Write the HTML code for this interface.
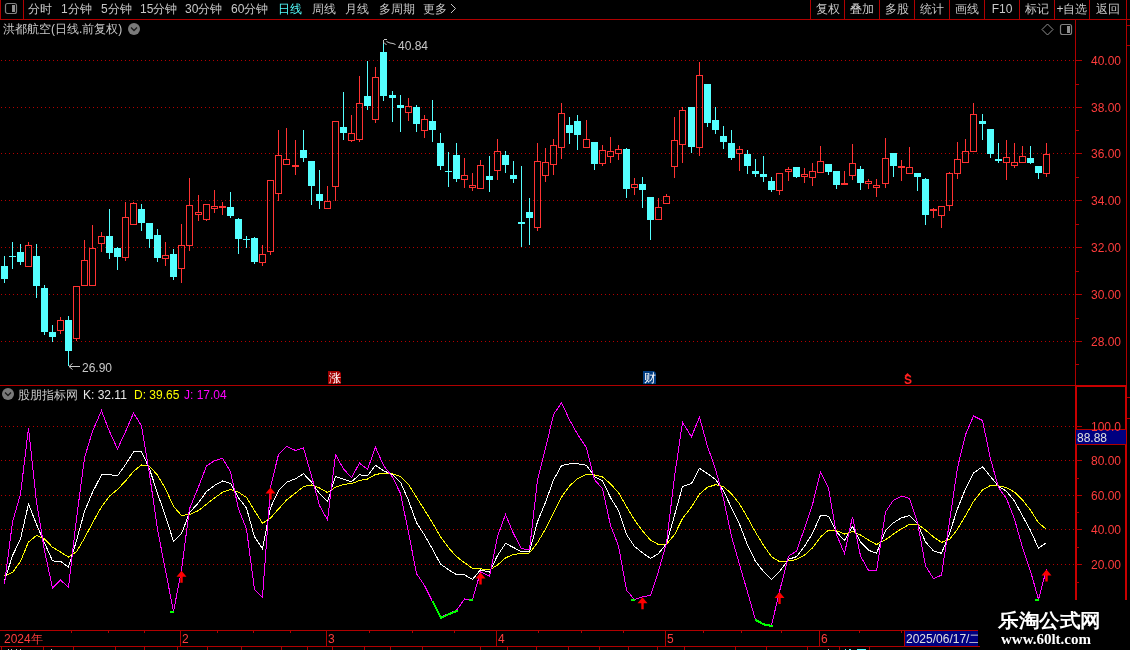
<!DOCTYPE html><html><head><meta charset="utf-8"><style>
html,body{margin:0;padding:0;background:#000;width:1130px;height:650px;overflow:hidden}
svg{position:absolute;left:0;top:0}
.t{font-family:"Liberation Sans",sans-serif;font-size:12px}
svg{will-change:transform}
</style></head><body>
<svg width="1130" height="650" viewBox="0 0 1130 650">
<rect width="1130" height="650" fill="#000"/>
<g shape-rendering="crispEdges"><line x1="1" y1="60.5" x2="1075" y2="60.5" stroke="#B40000" stroke-width="1" stroke-dasharray="1 3"/><line x1="1" y1="107.5" x2="1075" y2="107.5" stroke="#B40000" stroke-width="1" stroke-dasharray="1 3"/><line x1="1" y1="153.5" x2="1075" y2="153.5" stroke="#B40000" stroke-width="1" stroke-dasharray="1 3"/><line x1="1" y1="200.5" x2="1075" y2="200.5" stroke="#B40000" stroke-width="1" stroke-dasharray="1 3"/><line x1="1" y1="247.5" x2="1075" y2="247.5" stroke="#B40000" stroke-width="1" stroke-dasharray="1 3"/><line x1="1" y1="294.5" x2="1075" y2="294.5" stroke="#B40000" stroke-width="1" stroke-dasharray="1 3"/><line x1="1" y1="341.5" x2="1075" y2="341.5" stroke="#B40000" stroke-width="1" stroke-dasharray="1 3"/><line x1="1" y1="426.5" x2="1075" y2="426.5" stroke="#B40000" stroke-width="1" stroke-dasharray="1 3"/><line x1="1" y1="460.5" x2="1075" y2="460.5" stroke="#B40000" stroke-width="1" stroke-dasharray="1 3"/><line x1="1" y1="495.5" x2="1075" y2="495.5" stroke="#B40000" stroke-width="1" stroke-dasharray="1 3"/><line x1="1" y1="529.5" x2="1075" y2="529.5" stroke="#B40000" stroke-width="1" stroke-dasharray="1 3"/><line x1="1" y1="564.5" x2="1075" y2="564.5" stroke="#B40000" stroke-width="1" stroke-dasharray="1 3"/></g>
<g shape-rendering="crispEdges"><rect x="4" y="256" width="1" height="27" fill="#54FFFF"/><rect x="1" y="266" width="7" height="13" fill="#54FFFF"/><rect x="12" y="242" width="1" height="27" fill="#54FFFF"/><rect x="9" y="256" width="7" height="1" fill="#54FFFF"/><rect x="20" y="244" width="1" height="21" fill="#54FFFF"/><rect x="17" y="252" width="7" height="10" fill="#54FFFF"/><rect x="28" y="242" width="1" height="3" fill="#FF3232"/><rect x="25.5" y="245.5" width="6" height="21" fill="none" stroke="#FF3232" stroke-width="1"/><rect x="36" y="244" width="1" height="54" fill="#54FFFF"/><rect x="33" y="256" width="7" height="30" fill="#54FFFF"/><rect x="44" y="285" width="1" height="50" fill="#54FFFF"/><rect x="41" y="288" width="7" height="44" fill="#54FFFF"/><rect x="52" y="325" width="1" height="17" fill="#54FFFF"/><rect x="49" y="332" width="7" height="5" fill="#54FFFF"/><rect x="60" y="317" width="1" height="3" fill="#FF3232"/><rect x="60" y="331" width="1" height="3" fill="#FF3232"/><rect x="57.5" y="320.5" width="6" height="10" fill="none" stroke="#FF3232" stroke-width="1"/><rect x="68" y="316" width="1" height="50" fill="#54FFFF"/><rect x="65" y="320" width="7" height="31" fill="#54FFFF"/><rect x="76" y="339" width="1" height="2" fill="#FF3232"/><rect x="73.5" y="286.5" width="6" height="52" fill="none" stroke="#FF3232" stroke-width="1"/><rect x="84" y="240" width="1" height="20" fill="#FF3232"/><rect x="81.5" y="260.5" width="6" height="25" fill="none" stroke="#FF3232" stroke-width="1"/><rect x="92" y="225" width="1" height="23" fill="#FF3232"/><rect x="89.5" y="248.5" width="6" height="37" fill="none" stroke="#FF3232" stroke-width="1"/><rect x="101" y="232" width="1" height="4" fill="#FF3232"/><rect x="101" y="244" width="1" height="8" fill="#FF3232"/><rect x="98.5" y="236.5" width="6" height="7" fill="none" stroke="#FF3232" stroke-width="1"/><rect x="109" y="209" width="1" height="50" fill="#54FFFF"/><rect x="106" y="236" width="7" height="17" fill="#54FFFF"/><rect x="117" y="247" width="1" height="23" fill="#54FFFF"/><rect x="114" y="248" width="7" height="9" fill="#54FFFF"/><rect x="125" y="202" width="1" height="15" fill="#FF3232"/><rect x="125" y="258" width="1" height="3" fill="#FF3232"/><rect x="122.5" y="217.5" width="6" height="40" fill="none" stroke="#FF3232" stroke-width="1"/><rect x="133" y="202" width="1" height="1" fill="#FF3232"/><rect x="130.5" y="203.5" width="6" height="21" fill="none" stroke="#FF3232" stroke-width="1"/><rect x="141" y="204" width="1" height="27" fill="#54FFFF"/><rect x="138" y="209" width="7" height="14" fill="#54FFFF"/><rect x="149" y="223" width="1" height="25" fill="#54FFFF"/><rect x="146" y="223" width="7" height="16" fill="#54FFFF"/><rect x="157" y="229" width="1" height="33" fill="#54FFFF"/><rect x="154" y="235" width="7" height="23" fill="#54FFFF"/><rect x="165" y="242" width="1" height="13" fill="#FF3232"/><rect x="165" y="259" width="1" height="7" fill="#FF3232"/><rect x="162.5" y="255.5" width="6" height="3" fill="none" stroke="#FF3232" stroke-width="1"/><rect x="173" y="249" width="1" height="31" fill="#54FFFF"/><rect x="170" y="254" width="7" height="23" fill="#54FFFF"/><rect x="181" y="224" width="1" height="21" fill="#FF3232"/><rect x="181" y="269" width="1" height="14" fill="#FF3232"/><rect x="178.5" y="245.5" width="6" height="23" fill="none" stroke="#FF3232" stroke-width="1"/><rect x="189" y="178" width="1" height="27" fill="#FF3232"/><rect x="189" y="246" width="1" height="5" fill="#FF3232"/><rect x="186.5" y="205.5" width="6" height="40" fill="none" stroke="#FF3232" stroke-width="1"/><rect x="198" y="195" width="1" height="17" fill="#FF3232"/><rect x="198" y="215" width="1" height="6" fill="#FF3232"/><rect x="195.5" y="212.5" width="6" height="2" fill="none" stroke="#FF3232" stroke-width="1"/><rect x="206" y="220" width="1" height="1" fill="#FF3232"/><rect x="203.5" y="204.5" width="6" height="15" fill="none" stroke="#FF3232" stroke-width="1"/><rect x="214" y="190" width="1" height="16" fill="#FF3232"/><rect x="214" y="209" width="1" height="4" fill="#FF3232"/><rect x="211.5" y="206.5" width="6" height="2" fill="none" stroke="#FF3232" stroke-width="1"/><rect x="222" y="202" width="1" height="4" fill="#FF3232"/><rect x="222" y="208" width="1" height="7" fill="#FF3232"/><rect x="219" y="206" width="7" height="2" fill="#FF3232"/><rect x="230" y="192" width="1" height="26" fill="#54FFFF"/><rect x="227" y="207" width="7" height="9" fill="#54FFFF"/><rect x="238" y="218" width="1" height="36" fill="#54FFFF"/><rect x="235" y="219" width="7" height="20" fill="#54FFFF"/><rect x="246" y="236" width="1" height="12" fill="#54FFFF"/><rect x="243" y="239" width="7" height="1" fill="#54FFFF"/><rect x="254" y="237" width="1" height="27" fill="#54FFFF"/><rect x="251" y="238" width="7" height="24" fill="#54FFFF"/><rect x="262" y="245" width="1" height="9" fill="#FF3232"/><rect x="262" y="263" width="1" height="3" fill="#FF3232"/><rect x="259.5" y="254.5" width="6" height="8" fill="none" stroke="#FF3232" stroke-width="1"/><rect x="270" y="252" width="1" height="3" fill="#FF3232"/><rect x="267.5" y="180.5" width="6" height="71" fill="none" stroke="#FF3232" stroke-width="1"/><rect x="278" y="130" width="1" height="25" fill="#FF3232"/><rect x="278" y="194" width="1" height="7" fill="#FF3232"/><rect x="275.5" y="155.5" width="6" height="38" fill="none" stroke="#FF3232" stroke-width="1"/><rect x="286" y="128" width="1" height="31" fill="#FF3232"/><rect x="283.5" y="159.5" width="6" height="5" fill="none" stroke="#FF3232" stroke-width="1"/><rect x="295" y="140" width="1" height="25" fill="#FF3232"/><rect x="295" y="167" width="1" height="8" fill="#FF3232"/><rect x="292" y="165" width="7" height="2" fill="#FF3232"/><rect x="303" y="130" width="1" height="32" fill="#54FFFF"/><rect x="300" y="150" width="7" height="8" fill="#54FFFF"/><rect x="311" y="161" width="1" height="44" fill="#54FFFF"/><rect x="308" y="161" width="7" height="25" fill="#54FFFF"/><rect x="319" y="170" width="1" height="39" fill="#54FFFF"/><rect x="316" y="194" width="7" height="7" fill="#54FFFF"/><rect x="327" y="186" width="1" height="15" fill="#FF3232"/><rect x="324.5" y="201.5" width="6" height="7" fill="none" stroke="#FF3232" stroke-width="1"/><rect x="335" y="187" width="1" height="14" fill="#FF3232"/><rect x="332.5" y="121.5" width="6" height="65" fill="none" stroke="#FF3232" stroke-width="1"/><rect x="343" y="92" width="1" height="48" fill="#54FFFF"/><rect x="340" y="127" width="7" height="6" fill="#54FFFF"/><rect x="351" y="115" width="1" height="18" fill="#FF3232"/><rect x="351" y="141" width="1" height="1" fill="#FF3232"/><rect x="348.5" y="133.5" width="6" height="7" fill="none" stroke="#FF3232" stroke-width="1"/><rect x="359" y="76" width="1" height="27" fill="#FF3232"/><rect x="359" y="140" width="1" height="2" fill="#FF3232"/><rect x="356.5" y="103.5" width="6" height="36" fill="none" stroke="#FF3232" stroke-width="1"/><rect x="367" y="61" width="1" height="49" fill="#54FFFF"/><rect x="364" y="96" width="7" height="10" fill="#54FFFF"/><rect x="375" y="67" width="1" height="10" fill="#FF3232"/><rect x="375" y="120" width="1" height="3" fill="#FF3232"/><rect x="372.5" y="77.5" width="6" height="42" fill="none" stroke="#FF3232" stroke-width="1"/><rect x="383" y="42" width="1" height="59" fill="#54FFFF"/><rect x="380" y="52" width="7" height="44" fill="#54FFFF"/><rect x="392" y="91" width="1" height="31" fill="#54FFFF"/><rect x="389" y="95" width="7" height="3" fill="#54FFFF"/><rect x="400" y="95" width="1" height="37" fill="#54FFFF"/><rect x="397" y="105" width="7" height="3" fill="#54FFFF"/><rect x="408" y="98" width="1" height="8" fill="#FF3232"/><rect x="408" y="113" width="1" height="8" fill="#FF3232"/><rect x="405.5" y="106.5" width="6" height="6" fill="none" stroke="#FF3232" stroke-width="1"/><rect x="416" y="105" width="1" height="27" fill="#54FFFF"/><rect x="413" y="107" width="7" height="17" fill="#54FFFF"/><rect x="424" y="115" width="1" height="4" fill="#FF3232"/><rect x="424" y="131" width="1" height="7" fill="#FF3232"/><rect x="421.5" y="119.5" width="6" height="11" fill="none" stroke="#FF3232" stroke-width="1"/><rect x="432" y="100" width="1" height="42" fill="#54FFFF"/><rect x="429" y="121" width="7" height="9" fill="#54FFFF"/><rect x="440" y="133" width="1" height="37" fill="#54FFFF"/><rect x="437" y="143" width="7" height="23" fill="#54FFFF"/><rect x="448" y="152" width="1" height="35" fill="#54FFFF"/><rect x="445" y="171" width="7" height="1" fill="#54FFFF"/><rect x="456" y="143" width="1" height="39" fill="#54FFFF"/><rect x="453" y="155" width="7" height="24" fill="#54FFFF"/><rect x="464" y="158" width="1" height="17" fill="#FF3232"/><rect x="464" y="180" width="1" height="8" fill="#FF3232"/><rect x="461.5" y="175.5" width="6" height="4" fill="none" stroke="#FF3232" stroke-width="1"/><rect x="472" y="173" width="1" height="12" fill="#FF3232"/><rect x="472" y="188" width="1" height="3" fill="#FF3232"/><rect x="469.5" y="185.5" width="6" height="2" fill="none" stroke="#FF3232" stroke-width="1"/><rect x="480" y="160" width="1" height="5" fill="#FF3232"/><rect x="477.5" y="165.5" width="6" height="23" fill="none" stroke="#FF3232" stroke-width="1"/><rect x="489" y="156" width="1" height="36" fill="#54FFFF"/><rect x="486" y="176" width="7" height="4" fill="#54FFFF"/><rect x="497" y="139" width="1" height="12" fill="#FF3232"/><rect x="497" y="171" width="1" height="9" fill="#FF3232"/><rect x="494.5" y="151.5" width="6" height="19" fill="none" stroke="#FF3232" stroke-width="1"/><rect x="505" y="151" width="1" height="22" fill="#54FFFF"/><rect x="502" y="155" width="7" height="10" fill="#54FFFF"/><rect x="513" y="161" width="1" height="22" fill="#54FFFF"/><rect x="510" y="175" width="7" height="4" fill="#54FFFF"/><rect x="521" y="166" width="1" height="81" fill="#54FFFF"/><rect x="518" y="222" width="7" height="2" fill="#54FFFF"/><rect x="529" y="198" width="1" height="47" fill="#54FFFF"/><rect x="526" y="212" width="7" height="6" fill="#54FFFF"/><rect x="537" y="143" width="1" height="18" fill="#FF3232"/><rect x="537" y="228" width="1" height="3" fill="#FF3232"/><rect x="534.5" y="161.5" width="6" height="66" fill="none" stroke="#FF3232" stroke-width="1"/><rect x="545" y="148" width="1" height="14" fill="#FF3232"/><rect x="545" y="176" width="1" height="6" fill="#FF3232"/><rect x="542.5" y="162.5" width="6" height="13" fill="none" stroke="#FF3232" stroke-width="1"/><rect x="553" y="139" width="1" height="6" fill="#FF3232"/><rect x="553" y="165" width="1" height="10" fill="#FF3232"/><rect x="550.5" y="145.5" width="6" height="19" fill="none" stroke="#FF3232" stroke-width="1"/><rect x="561" y="103" width="1" height="10" fill="#FF3232"/><rect x="561" y="148" width="1" height="11" fill="#FF3232"/><rect x="558.5" y="113.5" width="6" height="34" fill="none" stroke="#FF3232" stroke-width="1"/><rect x="569" y="117" width="1" height="27" fill="#54FFFF"/><rect x="566" y="125" width="7" height="8" fill="#54FFFF"/><rect x="577" y="115" width="1" height="35" fill="#54FFFF"/><rect x="574" y="121" width="7" height="14" fill="#54FFFF"/><rect x="586" y="120" width="1" height="19" fill="#FF3232"/><rect x="583.5" y="139.5" width="6" height="8" fill="none" stroke="#FF3232" stroke-width="1"/><rect x="594" y="142" width="1" height="28" fill="#54FFFF"/><rect x="591" y="142" width="7" height="22" fill="#54FFFF"/><rect x="602" y="145" width="1" height="5" fill="#FF3232"/><rect x="602" y="164" width="1" height="2" fill="#FF3232"/><rect x="599.5" y="150.5" width="6" height="13" fill="none" stroke="#FF3232" stroke-width="1"/><rect x="610" y="137" width="1" height="14" fill="#FF3232"/><rect x="610" y="157" width="1" height="6" fill="#FF3232"/><rect x="607.5" y="151.5" width="6" height="5" fill="none" stroke="#FF3232" stroke-width="1"/><rect x="618" y="145" width="1" height="4" fill="#FF3232"/><rect x="618" y="154" width="1" height="6" fill="#FF3232"/><rect x="615.5" y="149.5" width="6" height="4" fill="none" stroke="#FF3232" stroke-width="1"/><rect x="626" y="148" width="1" height="50" fill="#54FFFF"/><rect x="623" y="149" width="7" height="40" fill="#54FFFF"/><rect x="634" y="178" width="1" height="6" fill="#FF3232"/><rect x="634" y="188" width="1" height="7" fill="#FF3232"/><rect x="631.5" y="184.5" width="6" height="3" fill="none" stroke="#FF3232" stroke-width="1"/><rect x="642" y="177" width="1" height="31" fill="#54FFFF"/><rect x="639" y="184" width="7" height="6" fill="#54FFFF"/><rect x="650" y="197" width="1" height="43" fill="#54FFFF"/><rect x="647" y="197" width="7" height="23" fill="#54FFFF"/><rect x="658" y="198" width="1" height="9" fill="#FF3232"/><rect x="655.5" y="207.5" width="6" height="12" fill="none" stroke="#FF3232" stroke-width="1"/><rect x="666" y="194" width="1" height="2" fill="#FF3232"/><rect x="663.5" y="196.5" width="6" height="7" fill="none" stroke="#FF3232" stroke-width="1"/><rect x="674" y="117" width="1" height="23" fill="#FF3232"/><rect x="674" y="167" width="1" height="11" fill="#FF3232"/><rect x="671.5" y="140.5" width="6" height="26" fill="none" stroke="#FF3232" stroke-width="1"/><rect x="682" y="107" width="1" height="3" fill="#FF3232"/><rect x="682" y="145" width="1" height="18" fill="#FF3232"/><rect x="679.5" y="110.5" width="6" height="34" fill="none" stroke="#FF3232" stroke-width="1"/><rect x="691" y="107" width="1" height="46" fill="#54FFFF"/><rect x="688" y="107" width="7" height="40" fill="#54FFFF"/><rect x="699" y="62" width="1" height="13" fill="#FF3232"/><rect x="699" y="148" width="1" height="8" fill="#FF3232"/><rect x="696.5" y="75.5" width="6" height="72" fill="none" stroke="#FF3232" stroke-width="1"/><rect x="707" y="84" width="1" height="43" fill="#54FFFF"/><rect x="704" y="84" width="7" height="39" fill="#54FFFF"/><rect x="715" y="107" width="1" height="27" fill="#54FFFF"/><rect x="712" y="120" width="7" height="10" fill="#54FFFF"/><rect x="723" y="126" width="1" height="23" fill="#54FFFF"/><rect x="720" y="136" width="7" height="6" fill="#54FFFF"/><rect x="731" y="130" width="1" height="30" fill="#54FFFF"/><rect x="728" y="143" width="7" height="15" fill="#54FFFF"/><rect x="739" y="146" width="1" height="3" fill="#FF3232"/><rect x="739" y="154" width="1" height="17" fill="#FF3232"/><rect x="736.5" y="149.5" width="6" height="4" fill="none" stroke="#FF3232" stroke-width="1"/><rect x="747" y="150" width="1" height="24" fill="#54FFFF"/><rect x="744" y="154" width="7" height="12" fill="#54FFFF"/><rect x="755" y="159" width="1" height="18" fill="#54FFFF"/><rect x="752" y="171" width="7" height="3" fill="#54FFFF"/><rect x="763" y="156" width="1" height="26" fill="#54FFFF"/><rect x="760" y="174" width="7" height="3" fill="#54FFFF"/><rect x="771" y="177" width="1" height="15" fill="#54FFFF"/><rect x="768" y="181" width="7" height="9" fill="#54FFFF"/><rect x="779" y="191" width="1" height="4" fill="#FF3232"/><rect x="776.5" y="173.5" width="6" height="17" fill="none" stroke="#FF3232" stroke-width="1"/><rect x="788" y="167" width="1" height="2" fill="#FF3232"/><rect x="788" y="172" width="1" height="9" fill="#FF3232"/><rect x="785.5" y="169.5" width="6" height="2" fill="none" stroke="#FF3232" stroke-width="1"/><rect x="796" y="167" width="1" height="11" fill="#54FFFF"/><rect x="793" y="167" width="7" height="10" fill="#54FFFF"/><rect x="804" y="168" width="1" height="6" fill="#FF3232"/><rect x="804" y="177" width="1" height="6" fill="#FF3232"/><rect x="801.5" y="174.5" width="6" height="2" fill="none" stroke="#FF3232" stroke-width="1"/><rect x="812" y="163" width="1" height="8" fill="#FF3232"/><rect x="812" y="178" width="1" height="8" fill="#FF3232"/><rect x="809.5" y="171.5" width="6" height="6" fill="none" stroke="#FF3232" stroke-width="1"/><rect x="820" y="146" width="1" height="15" fill="#FF3232"/><rect x="817.5" y="161.5" width="6" height="11" fill="none" stroke="#FF3232" stroke-width="1"/><rect x="828" y="164" width="1" height="11" fill="#54FFFF"/><rect x="825" y="164" width="7" height="8" fill="#54FFFF"/><rect x="836" y="171" width="1" height="18" fill="#54FFFF"/><rect x="833" y="171" width="7" height="14" fill="#54FFFF"/><rect x="844" y="171" width="1" height="12" fill="#FF3232"/><rect x="841" y="183" width="7" height="2" fill="#FF3232"/><rect x="852" y="144" width="1" height="19" fill="#FF3232"/><rect x="852" y="176" width="1" height="4" fill="#FF3232"/><rect x="849.5" y="163.5" width="6" height="12" fill="none" stroke="#FF3232" stroke-width="1"/><rect x="860" y="166" width="1" height="24" fill="#54FFFF"/><rect x="857" y="169" width="7" height="14" fill="#54FFFF"/><rect x="868" y="179" width="1" height="2" fill="#FF3232"/><rect x="868" y="184" width="1" height="5" fill="#FF3232"/><rect x="865.5" y="181.5" width="6" height="2" fill="none" stroke="#FF3232" stroke-width="1"/><rect x="876" y="179" width="1" height="6" fill="#FF3232"/><rect x="876" y="188" width="1" height="9" fill="#FF3232"/><rect x="873.5" y="185.5" width="6" height="2" fill="none" stroke="#FF3232" stroke-width="1"/><rect x="885" y="138" width="1" height="20" fill="#FF3232"/><rect x="885" y="184" width="1" height="4" fill="#FF3232"/><rect x="882.5" y="158.5" width="6" height="25" fill="none" stroke="#FF3232" stroke-width="1"/><rect x="893" y="153" width="1" height="24" fill="#54FFFF"/><rect x="890" y="153" width="7" height="13" fill="#54FFFF"/><rect x="901" y="160" width="1" height="6" fill="#FF3232"/><rect x="901" y="168" width="1" height="13" fill="#FF3232"/><rect x="898" y="166" width="7" height="2" fill="#FF3232"/><rect x="909" y="147" width="1" height="20" fill="#FF3232"/><rect x="906.5" y="167.5" width="6" height="6" fill="none" stroke="#FF3232" stroke-width="1"/><rect x="917" y="173" width="1" height="18" fill="#54FFFF"/><rect x="914" y="173" width="7" height="4" fill="#54FFFF"/><rect x="925" y="178" width="1" height="47" fill="#54FFFF"/><rect x="922" y="179" width="7" height="36" fill="#54FFFF"/><rect x="933" y="208" width="1" height="1" fill="#FF3232"/><rect x="933" y="211" width="1" height="7" fill="#FF3232"/><rect x="930" y="209" width="7" height="2" fill="#FF3232"/><rect x="941" y="216" width="1" height="12" fill="#FF3232"/><rect x="938.5" y="206.5" width="6" height="9" fill="none" stroke="#FF3232" stroke-width="1"/><rect x="949" y="172" width="1" height="1" fill="#FF3232"/><rect x="949" y="206" width="1" height="5" fill="#FF3232"/><rect x="946.5" y="173.5" width="6" height="32" fill="none" stroke="#FF3232" stroke-width="1"/><rect x="957" y="142" width="1" height="17" fill="#FF3232"/><rect x="957" y="174" width="1" height="5" fill="#FF3232"/><rect x="954.5" y="159.5" width="6" height="14" fill="none" stroke="#FF3232" stroke-width="1"/><rect x="965" y="139" width="1" height="12" fill="#FF3232"/><rect x="962.5" y="151.5" width="6" height="11" fill="none" stroke="#FF3232" stroke-width="1"/><rect x="973" y="103" width="1" height="11" fill="#FF3232"/><rect x="970.5" y="114.5" width="6" height="37" fill="none" stroke="#FF3232" stroke-width="1"/><rect x="982" y="114" width="1" height="26" fill="#54FFFF"/><rect x="979" y="121" width="7" height="3" fill="#54FFFF"/><rect x="990" y="129" width="1" height="29" fill="#54FFFF"/><rect x="987" y="129" width="7" height="25" fill="#54FFFF"/><rect x="998" y="143" width="1" height="20" fill="#54FFFF"/><rect x="995" y="159" width="7" height="2" fill="#54FFFF"/><rect x="1006" y="140" width="1" height="17" fill="#FF3232"/><rect x="1006" y="163" width="1" height="17" fill="#FF3232"/><rect x="1003.5" y="157.5" width="6" height="5" fill="none" stroke="#FF3232" stroke-width="1"/><rect x="1014" y="143" width="1" height="19" fill="#FF3232"/><rect x="1014" y="166" width="1" height="2" fill="#FF3232"/><rect x="1011.5" y="162.5" width="6" height="3" fill="none" stroke="#FF3232" stroke-width="1"/><rect x="1022" y="146" width="1" height="10" fill="#FF3232"/><rect x="1019.5" y="156.5" width="6" height="6" fill="none" stroke="#FF3232" stroke-width="1"/><rect x="1030" y="146" width="1" height="18" fill="#54FFFF"/><rect x="1027" y="158" width="7" height="5" fill="#54FFFF"/><rect x="1038" y="166" width="1" height="13" fill="#54FFFF"/><rect x="1035" y="166" width="7" height="7" fill="#54FFFF"/><rect x="1046" y="143" width="1" height="11" fill="#FF3232"/><rect x="1046" y="174" width="1" height="3" fill="#FF3232"/><rect x="1043.5" y="154.5" width="6" height="19" fill="none" stroke="#FF3232" stroke-width="1"/></g>
<g shape-rendering="crispEdges">
<polyline points="4.5,575.9 12.5,572.5 20.5,561.4 28.5,542.0 36.5,535.4 44.5,539.0 52.5,547.3 60.5,552.0 68.5,557.1 76.5,551.6 84.5,538.2 92.5,522.9 101.5,506.9 109.5,496.1 117.5,489.4 125.5,481.1 133.5,471.4 141.5,464.9 149.5,466.2 157.5,475.2 165.5,488.8 173.5,506.4 181.5,515.5 189.5,514.5 198.5,510.6 206.5,504.2 214.5,498.0 222.5,492.3 230.5,489.4 238.5,492.2 246.5,497.5 254.5,510.6 262.5,523.3 270.5,518.1 278.5,509.0 286.5,500.1 295.5,493.0 303.5,486.6 311.5,485.0 319.5,488.0 327.5,492.5 335.5,487.1 343.5,484.5 351.5,483.5 359.5,480.6 367.5,479.0 375.5,474.5 383.5,473.2 392.5,473.7 400.5,476.6 408.5,484.5 416.5,497.3 424.5,509.9 432.5,523.0 440.5,536.7 448.5,547.7 456.5,556.6 464.5,562.7 472.5,568.3 480.5,568.8 489.5,569.9 497.5,565.1 505.5,557.9 513.5,554.4 521.5,553.6 529.5,553.0 537.5,542.6 545.5,529.1 553.5,512.8 561.5,497.1 569.5,486.0 577.5,478.6 586.5,474.2 594.5,475.0 602.5,476.9 610.5,483.8 618.5,492.7 626.5,506.6 634.5,519.9 642.5,530.9 650.5,540.1 658.5,544.6 666.5,544.3 674.5,534.7 682.5,518.6 691.5,506.9 699.5,494.1 707.5,487.3 715.5,484.7 723.5,486.7 731.5,493.8 739.5,503.9 747.5,517.6 755.5,532.2 763.5,545.3 771.5,556.7 779.5,561.7 788.5,560.9 796.5,559.5 804.5,555.1 812.5,547.9 820.5,537.0 828.5,530.1 836.5,530.7 844.5,534.0 852.5,531.5 860.5,535.0 868.5,540.0 876.5,544.5 885.5,539.8 893.5,534.1 901.5,528.7 909.5,524.4 917.5,524.1 925.5,530.1 933.5,537.0 941.5,542.4 949.5,539.5 957.5,529.2 965.5,515.7 973.5,501.5 982.5,489.9 990.5,485.5 998.5,485.8 1006.5,487.6 1014.5,492.1 1022.5,500.0 1030.5,510.2 1038.5,522.8 1046.5,529.4" fill="none" stroke="#FFFF00" stroke-width="1" stroke-linejoin="miter"/>
<polyline points="4.5,580.6 12.5,555.7 20.5,539.0 28.5,504.0 36.5,524.3 44.5,542.8 52.5,560.9 60.5,561.4 68.5,567.1 76.5,540.6 84.5,511.5 92.5,492.3 101.5,474.8 109.5,474.6 117.5,475.9 125.5,464.6 133.5,452.0 141.5,451.8 149.5,468.8 157.5,493.3 165.5,516.1 173.5,541.4 181.5,533.7 189.5,512.6 198.5,502.7 206.5,491.5 214.5,485.5 222.5,481.0 230.5,483.4 238.5,497.8 246.5,508.0 254.5,536.9 262.5,548.7 270.5,507.7 278.5,490.8 286.5,482.2 295.5,478.8 303.5,473.7 311.5,482.0 319.5,493.8 327.5,501.7 335.5,476.3 343.5,479.3 351.5,481.6 359.5,474.8 367.5,475.8 375.5,465.4 383.5,470.6 392.5,474.8 400.5,482.2 408.5,500.5 416.5,522.7 424.5,535.1 432.5,549.2 440.5,564.0 448.5,569.7 456.5,574.6 464.5,574.8 472.5,579.5 480.5,569.8 489.5,572.0 497.5,555.5 505.5,543.4 513.5,547.5 521.5,552.0 529.5,551.9 537.5,521.7 545.5,502.3 553.5,480.0 561.5,465.6 569.5,463.9 577.5,463.8 586.5,465.3 594.5,476.6 602.5,480.8 610.5,497.6 618.5,510.5 626.5,534.5 634.5,546.5 642.5,552.8 650.5,558.5 658.5,553.5 666.5,543.9 674.5,515.4 682.5,486.5 691.5,483.6 699.5,468.4 707.5,473.6 715.5,479.5 723.5,490.7 731.5,507.9 739.5,524.1 747.5,545.0 755.5,561.4 763.5,571.5 771.5,579.6 779.5,571.6 788.5,559.3 796.5,556.7 804.5,546.2 812.5,533.4 820.5,515.3 828.5,516.2 836.5,532.0 844.5,540.5 852.5,526.6 860.5,541.9 868.5,550.2 876.5,553.3 885.5,530.5 893.5,522.8 901.5,517.8 909.5,515.7 917.5,523.5 925.5,542.0 933.5,550.9 941.5,553.3 949.5,533.5 957.5,508.7 965.5,488.7 973.5,473.0 982.5,466.8 990.5,476.6 998.5,486.3 1006.5,491.3 1014.5,501.1 1022.5,515.8 1030.5,530.5 1038.5,548.1 1046.5,542.6" fill="none" stroke="#FFFFFF" stroke-width="1" stroke-linejoin="miter"/>
<polyline points="4.5,583.9 12.5,522.0 20.5,494.3 28.5,428.1 36.5,502.1 44.5,550.5 52.5,587.9 60.5,580.1 68.5,587.3 76.5,518.6 84.5,458.0 92.5,431.2 101.5,410.7 109.5,431.5 117.5,449.0 125.5,431.6 133.5,413.1 141.5,425.7 149.5,474.0 157.5,529.5 165.5,570.5 173.5,611.5 181.5,570.2 189.5,508.8 198.5,486.9 206.5,466.0 214.5,460.6 222.5,458.4 230.5,471.6 238.5,509.1 246.5,529.1 254.5,589.4 262.5,597.4 270.5,486.9 278.5,454.5 286.5,446.4 295.5,450.5 303.5,447.9 311.5,475.9 319.5,505.5 327.5,519.9 335.5,454.7 343.5,468.8 351.5,477.7 359.5,463.1 367.5,469.4 375.5,447.2 383.5,465.5 392.5,477.0 400.5,493.6 408.5,532.4 416.5,573.6 424.5,585.5 432.5,601.6 440.5,617.2 448.5,613.7 456.5,610.4 464.5,599.0 472.5,599.5 480.5,571.9 489.5,576.2 497.5,536.4 505.5,514.4 513.5,533.6 521.5,548.7 529.5,549.6 537.5,480.0 545.5,448.5 553.5,414.6 561.5,402.7 569.5,419.8 577.5,434.1 586.5,447.6 594.5,479.7 602.5,488.7 610.5,525.3 618.5,546.0 626.5,590.1 634.5,599.7 642.5,596.7 650.5,595.4 658.5,571.2 666.5,543.0 674.5,476.8 682.5,422.3 691.5,436.8 699.5,417.0 707.5,446.4 715.5,469.1 723.5,498.8 731.5,536.3 739.5,564.4 747.5,592.1 755.5,619.8 763.5,623.9 771.5,625.5 779.5,591.5 788.5,556.1 796.5,551.1 804.5,528.5 812.5,504.6 820.5,471.9 828.5,488.3 836.5,534.6 844.5,553.5 852.5,516.7 860.5,555.9 868.5,570.4 876.5,571.0 885.5,512.0 893.5,500.1 901.5,496.1 909.5,498.4 917.5,522.3 925.5,565.9 933.5,578.7 941.5,575.1 949.5,521.6 957.5,467.8 965.5,434.6 973.5,416.0 982.5,420.5 990.5,458.9 998.5,487.5 1006.5,498.6 1014.5,519.1 1022.5,547.5 1030.5,571.1 1038.5,599.5 1046.5,569.0" fill="none" stroke="#FF00FF" stroke-width="1" stroke-linejoin="miter"/>
</g>
<g shape-rendering="crispEdges"><line x1="433" y1="602.1" x2="441" y2="617.7" stroke="#00FF00" stroke-width="2" stroke-linecap="square"/><line x1="441" y1="617.7" x2="449" y2="614.2" stroke="#00FF00" stroke-width="2" stroke-linecap="square"/><line x1="449" y1="614.2" x2="457" y2="610.9" stroke="#00FF00" stroke-width="2" stroke-linecap="square"/><line x1="756" y1="620.3" x2="764" y2="624.4" stroke="#00FF00" stroke-width="2" stroke-linecap="square"/><line x1="764" y1="624.4" x2="772" y2="626.0" stroke="#00FF00" stroke-width="2" stroke-linecap="square"/><rect x="170" y="611" width="4" height="2" fill="#00FF00"/><rect x="469" y="599" width="4" height="2" fill="#00FF00"/><rect x="631" y="599" width="4" height="2" fill="#00FF00"/><rect x="1035" y="599" width="4" height="2" fill="#00FF00"/></g>
<g><path d="M181.5 570.6979542810265 L186.5 576.6979542810265 L182.7 576.6979542810265 L182.7 582.6979542810265 L180.3 582.6979542810265 L180.3 576.6979542810265 L176.5 576.6979542810265 Z" fill="#FF0000"/><path d="M270.5 487.4180342661283 L275.5 493.4180342661283 L271.7 493.4180342661283 L271.7 499.4180342661283 L269.3 499.4180342661283 L269.3 493.4180342661283 L265.5 493.4180342661283 Z" fill="#FF0000"/><path d="M480.5 572.4078214306053 L485.5 578.4078214306053 L481.7 578.4078214306053 L481.7 584.4078214306053 L479.3 584.4078214306053 L479.3 578.4078214306053 L475.5 578.4078214306053 Z" fill="#FF0000"/><path d="M642.5 597.1887001875311 L647.5 603.1887001875311 L643.7 603.1887001875311 L643.7 609.1887001875311 L641.3 609.1887001875311 L641.3 603.1887001875311 L637.5 603.1887001875311 Z" fill="#FF0000"/><path d="M779.5 592.0364811766092 L784.5 598.0364811766092 L780.7 598.0364811766092 L780.7 604.0364811766092 L778.3 604.0364811766092 L778.3 598.0364811766092 L774.5 598.0364811766092 Z" fill="#FF0000"/><path d="M1046.5 569.4920953719526 L1051.5 575.4920953719526 L1047.7 575.4920953719526 L1047.7 581.4920953719526 L1045.3 581.4920953719526 L1045.3 575.4920953719526 L1041.5 575.4920953719526 Z" fill="#FF0000"/></g>
<g shape-rendering="crispEdges"><rect x="0" y="19" width="1130" height="1" fill="#B00000"/><rect x="0" y="0" width="1" height="19" fill="#B00000"/><rect x="23" y="0" width="1" height="19" fill="#B00000"/><rect x="810" y="0" width="1" height="19" fill="#B00000"/><rect x="844" y="0" width="1" height="19" fill="#B00000"/><rect x="879" y="0" width="1" height="19" fill="#B00000"/><rect x="914" y="0" width="1" height="19" fill="#B00000"/><rect x="949" y="0" width="1" height="19" fill="#B00000"/><rect x="984" y="0" width="1" height="19" fill="#B00000"/><rect x="1019" y="0" width="1" height="19" fill="#B00000"/><rect x="1054" y="0" width="1" height="19" fill="#B00000"/><rect x="1089" y="0" width="1" height="19" fill="#B00000"/><rect x="1126" y="0" width="1" height="19" fill="#B00000"/><rect x="1075" y="20" width="1" height="365" fill="#B00000"/><rect x="1126" y="20" width="1" height="365" fill="#B00000"/><rect x="1075" y="385" width="2" height="215" fill="#C80000"/><rect x="1125" y="385" width="2" height="215" fill="#C80000"/><rect x="0" y="385" width="1075" height="1" fill="#B00000"/><rect x="1075" y="385" width="52" height="2" fill="#C80000"/><rect x="1127" y="25" width="3" height="1" fill="#B00000"/><rect x="1127" y="45" width="3" height="1" fill="#B00000"/><rect x="1127" y="397" width="3" height="1" fill="#B00000"/><rect x="1127" y="418" width="3" height="1" fill="#B00000"/><rect x="1076" y="60" width="6" height="1" fill="#B00000"/><rect x="1076" y="107" width="6" height="1" fill="#B00000"/><rect x="1076" y="153" width="6" height="1" fill="#B00000"/><rect x="1076" y="200" width="6" height="1" fill="#B00000"/><rect x="1076" y="247" width="6" height="1" fill="#B00000"/><rect x="1076" y="294" width="6" height="1" fill="#B00000"/><rect x="1076" y="341" width="6" height="1" fill="#B00000"/><rect x="1076" y="84" width="3" height="1" fill="#B00000"/><rect x="1076" y="130" width="3" height="1" fill="#B00000"/><rect x="1076" y="177" width="3" height="1" fill="#B00000"/><rect x="1076" y="224" width="3" height="1" fill="#B00000"/><rect x="1076" y="271" width="3" height="1" fill="#B00000"/><rect x="1076" y="318" width="3" height="1" fill="#B00000"/><rect x="1076" y="364" width="3" height="1" fill="#B00000"/><rect x="1076" y="426" width="6" height="1" fill="#B00000"/><rect x="1076" y="460" width="6" height="1" fill="#B00000"/><rect x="1076" y="495" width="6" height="1" fill="#B00000"/><rect x="1076" y="529" width="6" height="1" fill="#B00000"/><rect x="1076" y="564" width="6" height="1" fill="#B00000"/><rect x="1076" y="443" width="3" height="1" fill="#B00000"/><rect x="1076" y="478" width="3" height="1" fill="#B00000"/><rect x="1076" y="512" width="3" height="1" fill="#B00000"/><rect x="1076" y="547" width="3" height="1" fill="#B00000"/><rect x="1076" y="582" width="3" height="1" fill="#B00000"/><rect x="0" y="630" width="905" height="1" fill="#B00000"/><rect x="0" y="646" width="980" height="1" fill="#B00000"/><rect x="71" y="631" width="1" height="2" fill="#B00000"/><rect x="108" y="631" width="1" height="2" fill="#B00000"/><rect x="144" y="631" width="1" height="2" fill="#B00000"/><rect x="217" y="631" width="1" height="2" fill="#B00000"/><rect x="253" y="631" width="1" height="2" fill="#B00000"/><rect x="290" y="631" width="1" height="2" fill="#B00000"/><rect x="369" y="631" width="1" height="2" fill="#B00000"/><rect x="412" y="631" width="1" height="2" fill="#B00000"/><rect x="454" y="631" width="1" height="2" fill="#B00000"/><rect x="538" y="631" width="1" height="2" fill="#B00000"/><rect x="581" y="631" width="1" height="2" fill="#B00000"/><rect x="623" y="631" width="1" height="2" fill="#B00000"/><rect x="703" y="631" width="1" height="2" fill="#B00000"/><rect x="741" y="631" width="1" height="2" fill="#B00000"/><rect x="781" y="631" width="1" height="2" fill="#B00000"/><rect x="859" y="631" width="1" height="2" fill="#B00000"/><rect x="901" y="631" width="1" height="2" fill="#B00000"/><rect x="180" y="631" width="1" height="15" fill="#B00000"/><rect x="326" y="631" width="1" height="15" fill="#B00000"/><rect x="496" y="631" width="1" height="15" fill="#B00000"/><rect x="665" y="631" width="1" height="15" fill="#B00000"/><rect x="819" y="631" width="1" height="15" fill="#B00000"/><rect x="1" y="647" width="1" height="3" fill="#B00000"/><rect x="43" y="647" width="1" height="3" fill="#B00000"/><rect x="73" y="647" width="1" height="3" fill="#B00000"/><rect x="115" y="647" width="1" height="3" fill="#B00000"/><rect x="144" y="647" width="1" height="3" fill="#B00000"/><rect x="177" y="647" width="1" height="3" fill="#B00000"/><rect x="207" y="647" width="1" height="3" fill="#B00000"/><rect x="241" y="647" width="1" height="3" fill="#B00000"/><rect x="281" y="647" width="1" height="3" fill="#B00000"/><rect x="307" y="647" width="1" height="3" fill="#B00000"/><rect x="332" y="647" width="1" height="3" fill="#B00000"/><rect x="364" y="647" width="1" height="3" fill="#B00000"/><rect x="390" y="647" width="1" height="3" fill="#B00000"/><rect x="422" y="647" width="1" height="3" fill="#B00000"/><rect x="480" y="647" width="1" height="3" fill="#B00000"/><rect x="507" y="647" width="1" height="3" fill="#B00000"/><rect x="536" y="647" width="1" height="3" fill="#B00000"/><rect x="568" y="647" width="1" height="3" fill="#B00000"/><rect x="599" y="647" width="1" height="3" fill="#B00000"/><rect x="628" y="647" width="1" height="3" fill="#B00000"/><rect x="657" y="647" width="1" height="3" fill="#B00000"/><rect x="684" y="647" width="1" height="3" fill="#B00000"/><rect x="735" y="647" width="1" height="3" fill="#B00000"/><rect x="766" y="647" width="1" height="3" fill="#B00000"/><rect x="807" y="647" width="1" height="3" fill="#B00000"/><rect x="839" y="647" width="1" height="3" fill="#B00000"/><rect x="869" y="647" width="1" height="3" fill="#B00000"/><rect x="8" y="649" width="1" height="1" fill="#C0C0C0"/><rect x="11" y="649" width="1" height="1" fill="#C0C0C0"/><rect x="16" y="649" width="1" height="1" fill="#C0C0C0"/><rect x="20" y="649" width="1" height="1" fill="#C0C0C0"/><rect x="51" y="649" width="1" height="1" fill="#C0C0C0"/><rect x="828" y="649" width="1" height="1" fill="#C0C0C0"/><rect x="845" y="649" width="1" height="1" fill="#54FFFF"/><rect x="849" y="649" width="2" height="1" fill="#54FFFF"/><rect x="857" y="649" width="9" height="1" fill="#54FFFF"/><rect x="904" y="630" width="74" height="17" fill="#000080"/><rect x="904" y="630" width="74" height="1" fill="#B00000"/><rect x="904" y="646" width="74" height="1" fill="#B00000"/><rect x="904" y="630" width="1" height="17" fill="#B00000"/><rect x="1076" y="429" width="50" height="16" fill="#000080"/><rect x="1076" y="429" width="50" height="1" fill="#B00000"/><rect x="1076" y="444" width="50" height="1" fill="#B00000"/></g>
<rect x="5.5" y="3.5" width="11" height="10" rx="2" ry="2" fill="none" stroke="#808080" stroke-width="1.2"/>
<rect x="12" y="5" width="3" height="7" fill="#909090"/>
<rect x="1060.5" y="24.5" width="11" height="10" rx="2" ry="2" fill="none" stroke="#808080" stroke-width="1.2"/>
<rect x="1067" y="26" width="3" height="7" fill="#909090"/>
<path d="M1047.5 24 L1053 29.5 L1047.5 35 L1042 29.5 Z" fill="none" stroke="#909090" stroke-width="1"/>
<circle cx="134" cy="29" r="6" fill="#7A7A7A"/><path d="M131 27.5 L134 30.5 L137 27.5" fill="none" stroke="#1A1A1A" stroke-width="1.3"/>
<circle cx="8" cy="394" r="6" fill="#7A7A7A"/><path d="M5 392.5 L8 395.5 L11 392.5" fill="none" stroke="#1A1A1A" stroke-width="1.3"/>
<text x="28" y="13" fill="#C8C8C8" font-size="12" text-anchor="start"  class="t">分时</text>
<text x="61" y="13" fill="#C8C8C8" font-size="12" text-anchor="start"  class="t">1分钟</text>
<text x="101" y="13" fill="#C8C8C8" font-size="12" text-anchor="start"  class="t">5分钟</text>
<text x="140" y="13" fill="#C8C8C8" font-size="12" text-anchor="start"  class="t">15分钟</text>
<text x="185" y="13" fill="#C8C8C8" font-size="12" text-anchor="start"  class="t">30分钟</text>
<text x="231" y="13" fill="#C8C8C8" font-size="12" text-anchor="start"  class="t">60分钟</text>
<text x="278" y="13" fill="#54FFFF" font-size="12" text-anchor="start"  class="t">日线</text>
<text x="312" y="13" fill="#C8C8C8" font-size="12" text-anchor="start"  class="t">周线</text>
<text x="345" y="13" fill="#C8C8C8" font-size="12" text-anchor="start"  class="t">月线</text>
<text x="379" y="13" fill="#C8C8C8" font-size="12" text-anchor="start"  class="t">多周期</text>
<text x="423" y="13" fill="#C8C8C8" font-size="12" text-anchor="start"  class="t">更多</text>
<path d="M451 4 L455.5 8.5 L451 13" fill="none" stroke="#C8C8C8" stroke-width="1"/>
<text x="827.5" y="13" fill="#C8C8C8" font-size="12" text-anchor="middle"  class="t">复权</text>
<text x="862.0" y="13" fill="#C8C8C8" font-size="12" text-anchor="middle"  class="t">叠加</text>
<text x="897.0" y="13" fill="#C8C8C8" font-size="12" text-anchor="middle"  class="t">多股</text>
<text x="932.0" y="13" fill="#C8C8C8" font-size="12" text-anchor="middle"  class="t">统计</text>
<text x="967.0" y="13" fill="#C8C8C8" font-size="12" text-anchor="middle"  class="t">画线</text>
<text x="1002.0" y="13" fill="#C8C8C8" font-size="12" text-anchor="middle"  class="t">F10</text>
<text x="1037.0" y="13" fill="#C8C8C8" font-size="12" text-anchor="middle"  class="t">标记</text>
<text x="1072.0" y="13" fill="#C8C8C8" font-size="12" text-anchor="middle"  class="t">+自选</text>
<text x="1108.0" y="13" fill="#C8C8C8" font-size="12" text-anchor="middle"  class="t">返回</text>
<text x="3" y="33" fill="#C8C8C8" font-size="12" text-anchor="start"  class="t">洪都航空(日线.前复权)</text>
<text x="1091" y="65" fill="#FF3C3C" font-size="12" text-anchor="start"  class="t">40.00</text>
<text x="1091" y="112" fill="#FF3C3C" font-size="12" text-anchor="start"  class="t">38.00</text>
<text x="1091" y="158" fill="#FF3C3C" font-size="12" text-anchor="start"  class="t">36.00</text>
<text x="1091" y="205" fill="#FF3C3C" font-size="12" text-anchor="start"  class="t">34.00</text>
<text x="1091" y="252" fill="#FF3C3C" font-size="12" text-anchor="start"  class="t">32.00</text>
<text x="1091" y="299" fill="#FF3C3C" font-size="12" text-anchor="start"  class="t">30.00</text>
<text x="1091" y="346" fill="#FF3C3C" font-size="12" text-anchor="start"  class="t">28.00</text>
<text x="1091" y="465" fill="#FF3C3C" font-size="12" text-anchor="start"  class="t">80.00</text>
<text x="1091" y="500" fill="#FF3C3C" font-size="12" text-anchor="start"  class="t">60.00</text>
<text x="1091" y="534" fill="#FF3C3C" font-size="12" text-anchor="start"  class="t">40.00</text>
<text x="1091" y="569" fill="#FF3C3C" font-size="12" text-anchor="start"  class="t">20.00</text>
<text x="1091" y="431" fill="#FF3C3C" font-size="12" text-anchor="start"  class="t">100.0</text>
<text x="1077" y="442" fill="#E0E0E0" font-size="12" text-anchor="start"  class="t">88.88</text>
<text x="18" y="399" fill="#C8C8C8" font-size="12" text-anchor="start"  class="t">股朋指标网</text>
<text x="83" y="399" fill="#E8E8E8" font-size="12" text-anchor="start"  class="t">K: 32.11</text>
<text x="134" y="399" fill="#FFFF00" font-size="12" text-anchor="start"  class="t">D: 39.65</text>
<text x="184" y="399" fill="#FF00FF" font-size="12" text-anchor="start"  class="t">J: 17.04</text>
<text x="4" y="643" fill="#FF3C3C" font-size="12" text-anchor="start"  class="t">2024年</text>
<text x="182" y="643" fill="#FF3C3C" font-size="12" text-anchor="start"  class="t">2</text>
<text x="328" y="643" fill="#FF3C3C" font-size="12" text-anchor="start"  class="t">3</text>
<text x="498" y="643" fill="#FF3C3C" font-size="12" text-anchor="start"  class="t">4</text>
<text x="667" y="643" fill="#FF3C3C" font-size="12" text-anchor="start"  class="t">5</text>
<text x="821" y="643" fill="#FF3C3C" font-size="12" text-anchor="start"  class="t">6</text>
<clipPath id="dc"><rect x="904" y="630" width="74" height="17"/></clipPath>
<g clip-path="url(#dc)">
<text x="906" y="643" fill="#E0E0E0" font-size="12" text-anchor="start"  class="t">2025/06/17/二</text>
</g>
<path d="M383.5 40 V43.5 M384 39.5 H387 M384 42.5 L386.5 45 M386.5 41.5 L390 43 L393 43.5 L395.5 44.5" fill="none" stroke="#C8C8C8" stroke-width="1"/>
<text x="398" y="50" fill="#C8C8C8" font-size="12" text-anchor="start"  class="t">40.84</text>
<path d="M69 366.5 L80 366.5 M69 366.5 L72.5 363.5 M69 366.5 L72.5 369.5" fill="none" stroke="#C8C8C8" stroke-width="1"/>
<text x="82" y="372" fill="#C8C8C8" font-size="12" text-anchor="start"  class="t">26.90</text>
<path d="M328 371 H339 L341 373 V384 H328 Z" fill="#A00000"/>
<text x="334.5" y="382" fill="#FFFFFF" font-size="11" text-anchor="middle"  class="t">涨</text>
<path d="M643 371 H654 L656 373 V384 H643 Z" fill="#003C80"/>
<text x="649.5" y="382" fill="#FFFFFF" font-size="11" text-anchor="middle"  class="t">财</text>
<path d="M904.5 376 L907.5 373 L910.5 376 Z" fill="#FF2020"/>
<text x="908" y="384" fill="#FF2020" font-size="10" text-anchor="middle" font-weight="bold" class="t">S</text>
<rect x="990" y="604" width="120" height="46" fill="#000"/>
<text x="998" y="626.5" fill="#FFFFFF" font-size="19" font-weight="bold" textLength="103" lengthAdjust="spacingAndGlyphs" font-family="Liberation Serif, serif">乐淘公式网</text>
<text x="1046" y="644" fill="#FFFFFF" font-size="15" font-weight="bold" text-anchor="middle" font-family="Liberation Serif, serif">www.60lt.com</text>
</svg>
</body></html>
